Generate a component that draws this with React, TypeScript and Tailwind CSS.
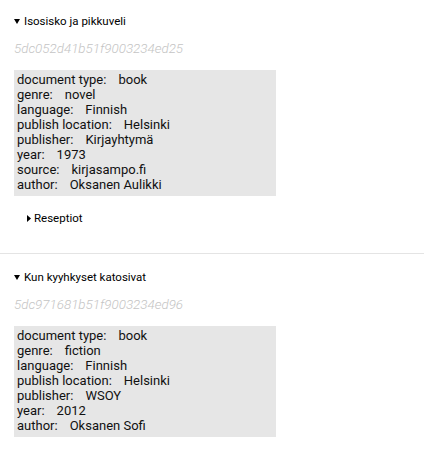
const BOOKS = [
  {
    title: "Isosisko ja pikkuveli",
    id: "5dc052d41b51f9003234ed25",
    fields: [
      ["document type", "book"],
      ["genre", "novel"],
      ["language", "Finnish"],
      ["publish location", "Helsinki"],
      ["publisher", "Kirjayhtymä"],
      ["year", "1973"],
      ["source", "kirjasampo.fi"],
      ["author", "Oksanen Aulikki"],
    ],
    receptions: true,
  },
  {
    title: "Kun kyyhkyset katosivat",
    id: "5dc971681b51f9003234ed96",
    fields: [
      ["document type", "book"],
      ["genre", "fiction"],
      ["language", "Finnish"],
      ["publish location", "Helsinki"],
      ["publisher", "WSOY"],
      ["year", "2012"],
      ["author", "Oksanen Sofi"],
    ],
    receptions: false,
  },
];

function Caret({ open }: { open: boolean }) {
  return open ? (
    <svg width="6" height="5" viewBox="0 0 6 5" className="shrink-0">
      <path d="M0 0H6L3 5Z" fill="#000" />
    </svg>
  ) : (
    <svg width="4" height="7" viewBox="0 0 4 7" className="shrink-0">
      <path d="M0 0L4 3.5L0 7Z" fill="#000" />
    </svg>
  );
}

export default function App() {
  return (
    <div className="min-h-screen bg-white text-black font-['Roboto',sans-serif]">
      {BOOKS.map((b, i) => (
        <div
          key={b.id}
          className={
            i === 0
              ? "pl-[14px] pt-[15px] pb-[28px] border-b border-[#e4e4e4]"
              : "pl-[14px] pt-[17px]"
          }
        >
          <div className="flex items-center gap-[4px] text-[11.5px] leading-[13px] h-[13px]">
            <Caret open />
            <span>{b.title}</span>
          </div>
          <div className="mt-[13px] text-[13.4px] leading-[16px] italic font-light text-[#c4c4c4]">
            {b.id}
          </div>
          <div className="mt-[13px] w-[262px] bg-[#e6e6e6] pl-[3px] pt-[2px] pb-[4px] text-[13px] leading-[15px] text-[#111]">
            {b.fields.map(([k, v]) => (
              <div key={k} className="whitespace-nowrap">
                <span>{k}:</span>
                <span className="ml-[12px]">{v}</span>
              </div>
            ))}
          </div>
          {b.receptions && (
            <div className="mt-[16px] ml-[13px] flex items-center gap-[3px] text-[11.5px] leading-[13px]">
              <Caret open={false} />
              <span>Reseptiot</span>
            </div>
          )}
        </div>
      ))}
    </div>
  );
}
